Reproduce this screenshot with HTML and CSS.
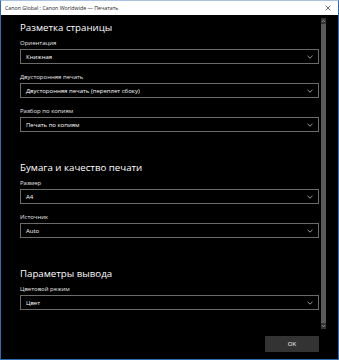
FILE: index.html
```html
<!DOCTYPE html>
<html lang="ru">
<head>
<meta charset="utf-8">
<title>Печатать</title>
<link rel="stylesheet" href="styles.css">
</head>
<body>
<div class="window">
  <div class="titlebar">
    <span class="title">Canon Global : Canon Worldwide — Печатать</span>
    <span class="close">
      <svg width="6" height="6" viewBox="0 0 6 6"><path d="M0.5 0.5L5.5 5.5M5.5 0.5L0.5 5.5" stroke="#666" stroke-width="0.9" fill="none"/></svg>
    </span>
  </div>
  <div class="main">
    <div class="scroll">
      <div class="content">
        <section class="section">
          <h2 class="heading">Разметка страницы</h2>
          <div class="field">
            <div class="label">Ориентация</div>
            <div class="select"><span>Книжная</span><svg class="chev" width="6" height="4" viewBox="0 0 6 4"><path d="M0.5 0.8L3 3.2L5.5 0.8" stroke="#aaa" stroke-width="0.9" fill="none"/></svg></div>
          </div>
          <div class="field">
            <div class="label">Двусторонняя печать</div>
            <div class="select"><span>Двусторонняя печать (переплет сбоку)</span><svg class="chev" width="6" height="4" viewBox="0 0 6 4"><path d="M0.5 0.8L3 3.2L5.5 0.8" stroke="#aaa" stroke-width="0.9" fill="none"/></svg></div>
          </div>
          <div class="field">
            <div class="label">Разбор по копиям</div>
            <div class="select"><span>Печать по копиям</span><svg class="chev" width="6" height="4" viewBox="0 0 6 4"><path d="M0.5 0.8L3 3.2L5.5 0.8" stroke="#aaa" stroke-width="0.9" fill="none"/></svg></div>
          </div>
        </section>
        <section class="section">
          <h2 class="heading">Бумага и качество печати</h2>
          <div class="field">
            <div class="label">Размер</div>
            <div class="select"><span>A4</span><svg class="chev" width="6" height="4" viewBox="0 0 6 4"><path d="M0.5 0.8L3 3.2L5.5 0.8" stroke="#aaa" stroke-width="0.9" fill="none"/></svg></div>
          </div>
          <div class="field">
            <div class="label">Источник</div>
            <div class="select"><span>Auto</span><svg class="chev" width="6" height="4" viewBox="0 0 6 4"><path d="M0.5 0.8L3 3.2L5.5 0.8" stroke="#aaa" stroke-width="0.9" fill="none"/></svg></div>
          </div>
        </section>
        <section class="section">
          <h2 class="heading">Параметры вывода</h2>
          <div class="field">
            <div class="label">Цветовой режим</div>
            <div class="select"><span>Цвет</span><svg class="chev" width="6" height="4" viewBox="0 0 6 4"><path d="M0.5 0.8L3 3.2L5.5 0.8" stroke="#aaa" stroke-width="0.9" fill="none"/></svg></div>
          </div>
        </section>
      </div>
      <div class="scrollbar">
        <svg class="arrow" width="5" height="4" viewBox="0 0 5 4"><path d="M0.8 3L2.5 1.2L4.2 3" stroke="#999" stroke-width="0.9" fill="none"/></svg>
        <div class="thumb"></div>
        <svg class="arrow" width="5" height="4" viewBox="0 0 5 4"><path d="M0.8 1L2.5 2.8L4.2 1" stroke="#999" stroke-width="0.9" fill="none"/></svg>
      </div>
    </div>
    <div class="footer">
      <button class="ok">OK</button>
    </div>
  </div>
</div>
</body>
</html>
```

FILE: styles.css
```css
html, body {
  margin: 0;
  padding: 0;
  background: #000;
}
body {
  font-family: "Open Sans", "Noto Sans", sans-serif;
}
.window {
  width: 339px;
  height: 360px;
  box-sizing: border-box;
  border: 1px solid #2b6cb3;
  border-top-color: #a9c4e2;
  display: flex;
  flex-direction: column;
  background: #000;
}
.titlebar {
  height: 14px;
  flex: none;
  background: #fff;
  display: flex;
  align-items: center;
  justify-content: space-between;
  padding: 0 7px 0 4px;
}
.title {
  font-size: 5.3px;
  color: #222;
  white-space: nowrap;
}
.close {
  display: flex;
  align-items: center;
}
.main {
  flex: 1;
  display: flex;
  flex-direction: column;
  min-height: 0;
}
.scroll {
  flex: 1;
  display: flex;
  min-height: 0;
}
.content {
  flex: 1;
  padding: 3px 2px 0 19px;
}
.section + .section {
  margin-top: 26px;
}
.heading {
  margin: 0;
  font-weight: 400;
  font-size: 9.7px;
  line-height: 20px;
  color: #fff;
}
.field {
  margin-bottom: 8px;
}
.label {
  font-size: 6px;
  line-height: 11px;
  color: #e6e6e6;
}
.select {
  height: 15px;
  box-sizing: border-box;
  border: 1px solid #6b6b6b;
  display: flex;
  align-items: center;
  justify-content: space-between;
  padding: 0 5px 0 5px;
  font-size: 6px;
  color: #fff;
}
.chev {
  display: block;
}
.scrollbar {
  width: 5px;
  margin: 3px 12px 3px 0;
  display: flex;
  flex-direction: column;
  align-items: center;
  background: #333;
}
.arrow {
  display: block;
  flex: none;
  margin: 1px 0;
}
.thumb {
  flex: 1;
  width: 5px;
  background: #5a5a5a;
}
.footer {
  height: 23px;
  flex: none;
  display: flex;
  justify-content: flex-end;
  align-items: flex-start;
  padding: 4px 19px 0 0;
}
.ok {
  width: 54px;
  height: 16px;
  border: none;
  background: #333;
  color: #fff;
  font-family: "Open Sans", "Noto Sans", sans-serif;
  font-size: 6px;
  padding: 0;
}
```
